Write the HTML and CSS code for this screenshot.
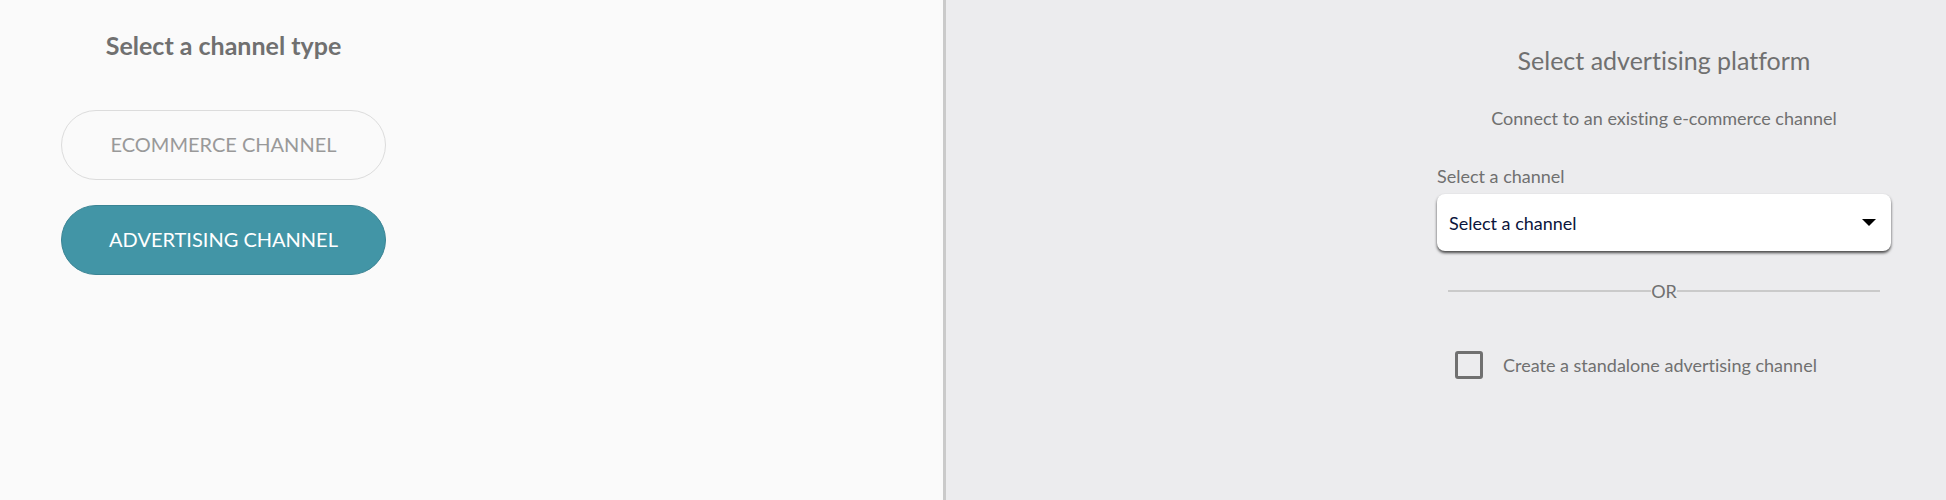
FILE: index.html
```
<!DOCTYPE html>
<html lang="en">
<head>
    <meta charset="UTF-8">
    <meta name="viewport" content="width=device-width, initial-scale=1.0">
    <title>Add Channel</title>
    <link rel="stylesheet" href="styles.css">
</head>
<body>
    <div class="page">
        <section class="channel-type">
            <h2>Select a channel type</h2>
            <button type="button" class="type-button">ECOMMERCE CHANNEL</button>
            <button type="button" class="type-button active">ADVERTISING CHANNEL</button>
        </section>

        <section class="platform">
            <form class="platform-form">
                <h3>Select advertising platform</h3>
                <p class="hint">Connect to an existing e-commerce channel</p>

                <label for="channel" class="channel-label">Select a channel</label>
                <div class="select-wrap">
                    <select id="channel" name="channel">
                        <option value="">Select a channel</option>
                    </select>
                    <svg class="arrow" width="14" height="7" viewBox="0 0 14 7" aria-hidden="true">
                        <path d="M0 0h14L7 7z" fill="#000"/>
                    </svg>
                </div>

                <div class="divider">OR</div>

                <div class="standalone">
                    <input type="checkbox" id="standalone" name="standalone">
                    <label for="standalone">Create a standalone advertising channel</label>
                </div>
            </form>
        </section>
    </div>
</body>
</html>
```
FILE: styles.css
```
* {
    box-sizing: border-box;
}

body {
    margin: 0;
    font-family: Lato, "Open Sans", sans-serif;
    font-size: 18px;
    font-variant-ligatures: none;
    line-height: 24px;
    color: #707070;
}

.page {
    display: grid;
    grid-template-columns: 943fr 1003fr;
    min-height: 100vh;
}

/* Left side: channel type buttons */
.channel-type {
    display: flex;
    flex-direction: column;
    align-items: flex-start;
    padding: 31px 61px;
    background: #fafafa;
}

h2 {
    width: 325px;
    margin: 0 0 51px;
    font-size: 25px;
    line-height: 28px;
    text-align: center;
    overflow: hidden;
}

.type-button {
    width: 325px;
    height: 70px;
    margin-bottom: 25px;
    padding: 0 0 2px;
    border: 1px solid #dcdcdc;
    border-radius: 35px;
    background: transparent;
    color: #999;
    font-family: inherit;
    font-size: 20px;
    cursor: pointer;
}

.type-button.active {
    border-color: #3a8494;
    background: #4295a6;
    color: #fff;
}

/* Right side: advertising platform form */
.platform {
    display: flex;
    justify-content: flex-end;
    padding: 44px 55px;
    border-left: 3px solid #cacaca;
    background: #ececee;
}

.platform-form {
    width: 454px;
}

h3 {
    margin: 0 0 30px;
    font-size: 25px;
    font-weight: normal;
    line-height: 32px;
    text-align: center;
}

.hint {
    margin: 0 0 34px;
    text-align: center;
}

.channel-label {
    display: block;
    margin-bottom: 6px;
}

.select-wrap {
    position: relative;
}

select {
    display: block;
    width: 100%;
    height: 57px;
    padding: 0 40px 0 12px;
    border: none;
    border-radius: 8px;
    background: #fff;
    box-shadow: 0 2px 3px rgba(0, 0, 0, 0.7);
    color: #0a143c;
    font-family: inherit;
    font-size: 18px;
    appearance: none;
}

.arrow {
    position: absolute;
    top: 25px;
    right: 15px;
    pointer-events: none;
}

.divider {
    display: flex;
    align-items: center;
    margin: 28px 11px 48px;
}

.divider::before,
.divider::after {
    content: "";
    flex: 1;
    height: 2px;
    background: #cacaca;
}

.standalone {
    display: flex;
    align-items: center;
    gap: 20px;
    padding-left: 18px;
}

.standalone input {
    width: 28px;
    height: 28px;
    margin: 0;
    border: 3px solid #707070;
    border-radius: 3px;
    appearance: none;
}
```
